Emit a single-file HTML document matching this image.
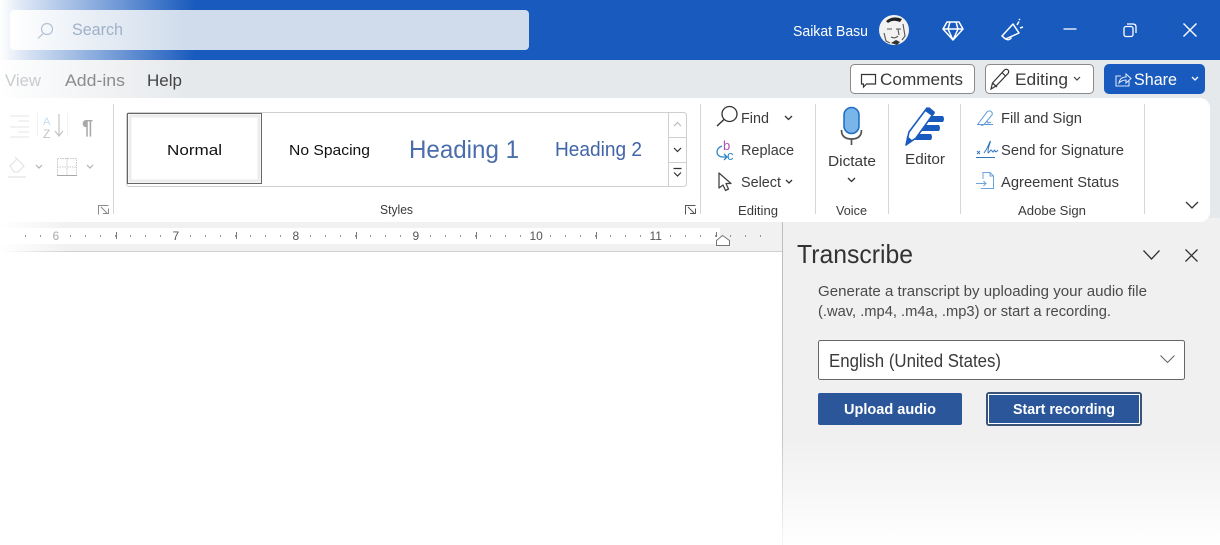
<!DOCTYPE html>
<html><head><meta charset="utf-8"><title>Transcribe</title>
<style>html,body{margin:0;padding:0;background:#fff;overflow:hidden}svg{display:block}text{font-family:"Liberation Sans",sans-serif;fill:#3a3a3a}</style></head>
<body>
<svg width="1220" height="545" viewBox="0 0 1220 545" xmlns="http://www.w3.org/2000/svg">
<defs>
<linearGradient id="fadeTop"><stop offset="0" stop-color="#fff"/><stop offset=".12" stop-color="#fff" stop-opacity=".85"/><stop offset="1" stop-color="#fff" stop-opacity="0"/></linearGradient>
<linearGradient id="fadeSearch"><stop offset="0" stop-color="#fff"/><stop offset="1" stop-color="#fff" stop-opacity="0"/></linearGradient>
<linearGradient id="fadeBottom" x1="0" y1="0" x2="0" y2="1"><stop offset="0" stop-color="#fff" stop-opacity="0"/><stop offset="1" stop-color="#fff"/></linearGradient>
<linearGradient id="fadeRuler"><stop offset="0" stop-color="#fff"/><stop offset="1" stop-color="#fff" stop-opacity="0"/></linearGradient>
<linearGradient id="paneLine" gradientUnits="userSpaceOnUse" x1="0" y1="222" x2="0" y2="545"><stop offset="0" stop-color="#bdbdbd"/><stop offset=".65" stop-color="#c4c4c4"/><stop offset="1" stop-color="#f4f4f4"/></linearGradient>
</defs>
<rect width="1220" height="545" fill="#fff"/>
<!-- title bar -->
<rect width="1220" height="60" fill="#185abd"/>
<rect width="195" height="60" fill="url(#fadeTop)"/>
<rect x="10" y="10" width="519" height="40" rx="4" fill="#d0dcec"/>
<rect x="10" y="10" width="175" height="40" rx="4" fill="url(#fadeSearch)"/>
<circle cx="47" cy="29" r="5.5" fill="none" stroke="#b5c2d5" stroke-width="1.2"/><path d="M43 33.5L38 38.5" stroke="#b5c2d5" stroke-width="1.2"/>
<text x="72" y="35" font-size="16.5" style="fill:#9fb0c8" textLength="51" lengthAdjust="spacingAndGlyphs">Search</text>
<text x="793" y="36" font-size="14.5" style="fill:#fff" textLength="75" lengthAdjust="spacingAndGlyphs">Saikat Basu</text>
<!-- avatar -->
<circle cx="894" cy="30" r="15" fill="#f2f2f2"/>
<path d="M886 21Q893 15 902 19L900 22Q893 19 888 23Z" fill="#222"/>
<path d="M887 29h5M896 29h5M891 37q4 2 7-1M898 29l1 6M903 24l2 12-3 4M884 33l2 8 4 2" stroke="#555" stroke-width="1.100" fill="none"/>
<path d="M891 43l5-3 4 2-3 3z" fill="#333"/>
<!-- diamond -->
<path d="M947 22h12l4 7-10 11-10-11zM943 29h20M950 22l-2 7 5 11 5-11-2-7" fill="none" stroke="#fff" stroke-width="1.500" stroke-linejoin="round"/>
<!-- megaphone -->
<path d="M1013 24L1002 36l3.500 3 13.500-6z" fill="none" stroke="#fff" stroke-width="1.500" stroke-linejoin="round"/>
<path d="M1006 39q3 2 5.500-1.500M1017 25l2-3.500M1020 28l3-1M1019 20l1-1" fill="none" stroke="#fff" stroke-width="1.500"/>
<path d="M1063.500 29h13" stroke="#fff" stroke-width="1.300"/>
<rect x="1124" y="26.500" width="9" height="10" rx="2" fill="none" stroke="#fff" stroke-width="1.300"/><path d="M1127 24h6q3 0 3 3v6" fill="none" stroke="#fff" stroke-width="1.300"/>
<path d="M1183.500 23.500l13 13M1196.500 23.500l-13 13" stroke="#fff" stroke-width="1.400"/>
<!-- tabs -->
<rect y="60" width="1220" height="162" fill="#e6e9ec"/>
<rect y="60" width="190" height="40" fill="url(#fadeTop)"/>
<text x="5" y="86" font-size="16.5" style="fill:#c9cccf" textLength="36" lengthAdjust="spacingAndGlyphs">View</text>
<text x="65" y="86" font-size="16.500" style="fill:#8c8c8c" textLength="60" lengthAdjust="spacingAndGlyphs">Add-ins</text>
<text x="147" y="86" font-size="16.500" style="fill:#444" textLength="35" lengthAdjust="spacingAndGlyphs">Help</text>
<rect x="850.500" y="64.500" width="124" height="29" rx="4" fill="#fff" stroke="#8a8a8a"/>
<path d="M861.500 74.500h14v9.500h-9l-3 3v-3h-2z" fill="none" stroke="#333" stroke-width="1.200"/>
<text x="880" y="85" font-size="17" textLength="83" lengthAdjust="spacingAndGlyphs">Comments</text>
<rect x="985.500" y="64.500" width="108" height="29" rx="4" fill="#fff" stroke="#8a8a8a"/>
<path d="M991 89l1.500-6 12-13q2-1.500 3.500 0t0 3.500l-12 12.500zM992.500 83l4.500 4M1002 72.500l4 4" fill="none" stroke="#333" stroke-width="1.200"/>
<text x="1015" y="85" font-size="17" textLength="53" lengthAdjust="spacingAndGlyphs">Editing</text>
<path d="M1074 77l3 3 3-3" fill="none" stroke="#444" stroke-width="1.200"/>
<rect x="1104" y="64" width="101" height="30" rx="5" fill="#185abd"/>
<path d="M1121 76h-5v10h13v-5M1119 83q1-6 7-6v-3l5 4.500-5 4.500v-3q-4 0-7 3z" fill="none" stroke="#dbe6f5" stroke-width="1.100"/>
<text x="1134" y="85" font-size="17" style="fill:#fff" textLength="43" lengthAdjust="spacingAndGlyphs">Share</text>
<path d="M1192 77l3 3 3-3" fill="none" stroke="#fff" stroke-width="1.300"/>
<!-- ruler backdrop -->
<rect y="218" width="1220" height="34" fill="#f1f1f1"/>
<rect y="228" width="720" height="16" fill="#fff"/>
<path d="M0 251.500H782" stroke="#cfcfcf"/>
<rect y="218" width="70" height="34" fill="url(#fadeRuler)"/>
<!-- ribbon -->
<path d="M0 98H1200a10 10 0 0 1 10 10V212a10 10 0 0 1-10 10H0z" fill="#fff"/>
<path d="M113.500 104V214M700.500 104V214M815.500 104V214M888.500 104V214M960.500 104V214M1144.500 104V214" stroke="#d6d6d6"/>
<!-- faded icons left -->
<path d="M10 116h19M18 121h11M10 127h19M18 132h11M10 137h19" stroke="#eeeeee" stroke-width="1.500"/>
<path d="M37.500 113V136M67.500 113V136" stroke="#f2f2f2"/>
<text x="43" y="125" font-size="11" style="fill:#c2dcf0">A</text><text x="43" y="138" font-size="12" style="fill:#c4c4c4">Z</text>
<path d="M59 114V136M55 131l4 5 4-5" fill="none" stroke="#c4c4c4" stroke-width="1.200"/>
<text x="82" y="134" font-size="20" font-weight="bold" style="fill:#a8a8a8">¶</text>
<path d="M10 166l7-7 7 7-6 6H14zM17 159l-2-2" fill="none" stroke="#e6e6e6" stroke-width="1.300"/><path d="M8 177h18" stroke="#eeeeee" stroke-width="2"/>
<path d="M36 165l3 3 3-3M87 165l3 3 3-3" fill="none" stroke="#b0b0b0" stroke-width="1.200"/>
<rect x="57.500" y="158.500" width="19" height="17" fill="none" stroke="#c8c8c8" stroke-dasharray="1.500 1"/><path d="M67 158v18M57 167h20" stroke="#c8c8c8" stroke-dasharray="1.500 1"/><path d="M57 175.500h20" stroke="#a8a8a8"/>
<path d="M98.500 214.500v-9h10M101 207l6 6M103 213.500h5.500v-5" fill="none" stroke="#8a8a8a"/>
<!-- styles gallery -->
<rect x="126.500" y="112.500" width="560" height="74" rx="3" fill="#fff" stroke="#cfcfcf"/>
<rect x="127.500" y="113.500" width="134" height="70" fill="#fff" stroke="#666"/>
<rect x="130" y="116" width="129" height="65" fill="none" stroke="#ececec" stroke-width="3"/>
<path d="M668.500 112.500V186.500M668.500 137.500H687M668.500 162.500H687" stroke="#cfcfcf"/>
<path d="M674 126l3.500-3.500 3.500 3.500" fill="none" stroke="#bbb" stroke-width="1.200"/>
<path d="M674 148l3.500 3.500 3.500-3.500" fill="none" stroke="#333" stroke-width="1.200"/>
<path d="M673.500 168.500h8M674 172.500l3.500 3.500 3.500-3.500" fill="none" stroke="#333" stroke-width="1.200"/>
<text x="167" y="155" font-size="15" style="fill:#111" textLength="55" lengthAdjust="spacingAndGlyphs">Normal</text>
<text x="289" y="155" font-size="15" style="fill:#111" textLength="81" lengthAdjust="spacingAndGlyphs">No Spacing</text>
<text x="409" y="158" font-size="25" style="fill:#4a6dac" textLength="110" lengthAdjust="spacingAndGlyphs">Heading 1</text>
<text x="555" y="156" font-size="20.500" style="fill:#4064a6" textLength="87" lengthAdjust="spacingAndGlyphs">Heading 2</text>
<text x="380" y="214" font-size="12.500" textLength="33" lengthAdjust="spacingAndGlyphs">Styles</text>
<path d="M685.500 214.500v-9h10M688 207l6 6M690 213.500h5.500v-5" fill="none" stroke="#555"/>
<!-- editing -->
<circle cx="729.500" cy="114" r="7.500" fill="none" stroke="#333" stroke-width="1.300"/><path d="M724 119.500L717 126" stroke="#333" stroke-width="1.500"/>
<text x="741" y="123" font-size="15" textLength="28" lengthAdjust="spacingAndGlyphs">Find</text>
<path d="M785 116l3.500 3.500 3.500-3.500" fill="none" stroke="#333" stroke-width="1.300"/>
<text x="723" y="150" font-size="13" style="fill:#b14fb0">b</text><text x="727" y="160" font-size="13" style="fill:#2e86c8">c</text>
<path d="M722 146q-5 2-5 6t5 5h5M724 154l3 3-3 3" fill="none" stroke="#2e86c8" stroke-width="1.300"/>
<text x="741" y="155" font-size="15" textLength="53" lengthAdjust="spacingAndGlyphs">Replace</text>
<path d="M719 173v15l4-3 2.500 5.500 3-1.500-2.500-5.500h5z" fill="none" stroke="#444" stroke-width="1.300" stroke-linejoin="round"/>
<text x="741" y="187" font-size="15" textLength="40" lengthAdjust="spacingAndGlyphs">Select</text>
<path d="M786 180l3 3 3-3" fill="none" stroke="#333" stroke-width="1.300"/>
<text x="738" y="215" font-size="12.500" textLength="40" lengthAdjust="spacingAndGlyphs">Editing</text>
<!-- voice -->
<rect x="844" y="107.500" width="15" height="26" rx="7.500" fill="#7ab5ea" stroke="#1d6bc4" stroke-width="1.500"/>
<path d="M841.500 130q0 9 10 9t10-9M851.500 139v6" fill="none" stroke="#555" stroke-width="1.700"/>
<text x="828" y="166" font-size="15" textLength="48" lengthAdjust="spacingAndGlyphs">Dictate</text>
<path d="M848 178l3.500 3.500 3.500-3.500" fill="none" stroke="#333" stroke-width="1.300"/>
<text x="836" y="215" font-size="12.500" textLength="31" lengthAdjust="spacingAndGlyphs">Voice</text>
<!-- editor -->
<path d="M906 145l3-13 18-24 7 5-18 25z" fill="none" stroke="#185abd" stroke-width="1.600" stroke-linejoin="round"/>
<path d="M906 145l1-9 5 4z" fill="#185abd"/><path d="M929 107l6 5-3 4-7-5z" fill="#185abd"/>
<path d="M931 116h12q2 3 0 6h-16zM925 125h14q2 3 0 6h-18zM919 134h12q2 3 0 6h-16z" fill="#185abd"/>
<text x="905" y="164" font-size="15" textLength="40" lengthAdjust="spacingAndGlyphs">Editor</text>
<!-- adobe -->
<path d="M978 124l9-12q2-2 4-.5t1 3.500l-8 9.500q-2 1.500-3 .5M977 124.500h16M986 122q2-1 2 1 2-1 3 0" fill="none" stroke="#5e9bd8" stroke-width="1"/>
<text x="1001" y="123" font-size="15" textLength="81" lengthAdjust="spacingAndGlyphs">Fill and Sign</text>
<path d="M977 151l3 3M980 151l-3 3" stroke="#2e75c0" stroke-width=".9"/>
<path d="M984 153q3-4 5-9t1-1q-2 5-2 9 0 2 2-1 1-2 2 0 1 2 2 0 1-2 1 0 1 2 3-1M976 157.500h19" fill="none" stroke="#2e75c0" stroke-width="1"/>
<text x="1001" y="155" font-size="15" textLength="123" lengthAdjust="spacingAndGlyphs">Send for Signature</text>
<path d="M983 179v-6.500h7l3.500 3.500v12.500h-12.500M990 172.500v3.500h3.500M976 183.500h10M983.500 181l2.500 2.500-2.500 2.500" fill="none" stroke="#6ba3dc" stroke-width="1"/>
<text x="1001" y="187" font-size="15" textLength="118" lengthAdjust="spacingAndGlyphs">Agreement Status</text>
<text x="1018" y="215" font-size="12.500" textLength="68" lengthAdjust="spacingAndGlyphs">Adobe Sign</text>
<path d="M1186 202l6 6 6-6" fill="none" stroke="#333" stroke-width="1.300"/>
<!-- ruler -->
<path d="M25 236H720" stroke="#777" stroke-width="1.500" stroke-dasharray="1 14"/>
<path d="M725 236H770" stroke="#777" stroke-width="1.500" stroke-dasharray="1 14" stroke-dashoffset="-5"/>
<path d="M116.500 232v7M236.500 232v7M356.500 232v7M476.500 232v7M596.500 232v7" stroke="#777"/>
<rect x="50" y="229" width="12" height="14" fill="#fff"/><rect x="170" y="229" width="12" height="14" fill="#fff"/><rect x="290" y="229" width="12" height="14" fill="#fff"/><rect x="410" y="229" width="12" height="14" fill="#fff"/><rect x="528" y="229" width="17" height="14" fill="#fff"/><rect x="648" y="229" width="17" height="14" fill="#fff"/>
<text x="52.500" y="240" font-size="12" style="fill:#aaa">6</text>
<text x="172.500" y="240" font-size="12" style="fill:#555">7</text>
<text x="292.500" y="240" font-size="12" style="fill:#555">8</text>
<text x="412.500" y="240" font-size="12" style="fill:#555">9</text>
<text x="529.500" y="240" font-size="12" style="fill:#555">10</text>
<text x="649.500" y="240" font-size="12" style="fill:#555">11</text>
<path d="M716.500 245.500v-5l6-5 7 5v5z" fill="#fff" stroke="#777"/><path d="M716.500 232v5" stroke="#777"/>
<!-- pane -->
<rect x="782" y="222" width="438" height="323" fill="#f0f0f0"/>
<rect x="782" y="440" width="438" height="105" fill="url(#fadeBottom)"/>
<rect x="782" y="222" width="1" height="323" fill="url(#paneLine)"/>
<text x="797" y="263" font-size="26" style="fill:#333" textLength="116" lengthAdjust="spacingAndGlyphs">Transcribe</text>
<path d="M1143.500 250.500l8 8.500 8-8.500" fill="none" stroke="#333" stroke-width="1.300"/>
<path d="M1185.500 249.500l12 12M1197.500 249.500l-12 12" stroke="#333" stroke-width="1.300"/>
<text x="818" y="296" font-size="14.500" style="fill:#4a4a4a" textLength="329" lengthAdjust="spacingAndGlyphs">Generate a transcript by uploading your audio file</text>
<text x="818" y="316" font-size="14.500" style="fill:#4a4a4a" textLength="293" lengthAdjust="spacingAndGlyphs">(.wav, .mp4, .m4a, .mp3) or start a recording.</text>
<rect x="818.500" y="340.500" width="366" height="39" rx="2" fill="#fff" stroke="#666"/>
<text x="829" y="367" font-size="18" textLength="172" lengthAdjust="spacingAndGlyphs">English (United States)</text>
<path d="M1160.500 355.500l7 7 7-7" fill="none" stroke="#666" stroke-width="1.100"/>
<rect x="818" y="393" width="144" height="32" rx="2" fill="#2b579a"/>
<text x="844" y="414" font-size="15" font-weight="bold" style="fill:#fff" textLength="92" lengthAdjust="spacingAndGlyphs">Upload audio</text>
<rect x="986" y="392" width="156" height="34" rx="3" fill="#3b5279"/>
<rect x="988.500" y="394.500" width="151" height="29" fill="#2b579a" stroke="#fff"/>
<text x="1013" y="414" font-size="15" font-weight="bold" style="fill:#fff" textLength="102" lengthAdjust="spacingAndGlyphs">Start recording</text>
</svg>
</body></html>
